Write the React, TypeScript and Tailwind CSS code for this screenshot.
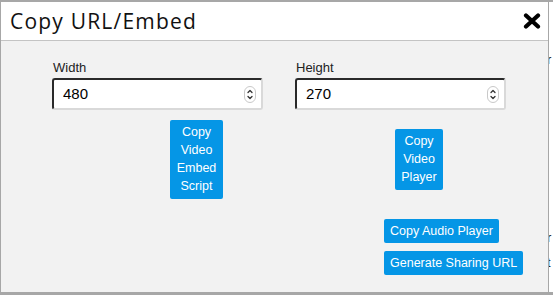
import { useState } from "react";

const sans = { fontFamily: '"Liberation Sans", Arial, sans-serif' };

function Spinner() {
  return (
    <span className="flex h-[17px] w-[12px] flex-col items-center justify-center rounded-full border border-[#c9c9c9] bg-white">
      <svg width="8" height="13" viewBox="0 0 8 13" fill="none" stroke="#333" strokeWidth="1.3" strokeLinecap="round" strokeLinejoin="round">
        <path d="M2 4.5 L4 2.5 L6 4.5" />
        <path d="M2 8.5 L4 10.5 L6 8.5" />
      </svg>
    </span>
  );
}

function NumberField({ label, value, onChange }: { label: string; value: string; onChange: (v: string) => void }) {
  return (
    <div className="flex flex-col">
      <label className="pl-[1px] text-[13px] leading-[15px] text-[#222]">{label}</label>
      <div className="mt-[3px] flex h-[32px] items-center rounded-[3px] border-2 border-t-[#2a2a2a] border-l-[#2a2a2a] border-r-[#d9d9d9] border-b-[#d9d9d9] bg-white pl-[9px] pr-[5px]">
        <input
          value={value}
          onChange={(e) => onChange(e.target.value)}
          className="min-w-0 flex-1 bg-transparent text-[15px] text-black outline-none"
          style={sans}
        />
        <Spinner />
      </div>
    </div>
  );
}

function BlueButton({ children, className = "" }: { children: React.ReactNode; className?: string }) {
  return (
    <button
      type="button"
      className={`rounded-[2px] bg-[#0596e6] text-center text-[12.5px] leading-[18px] text-white ${className}`}
    >
      {children}
    </button>
  );
}

export default function App() {
  const [width, setWidth] = useState("480");
  const [height, setHeight] = useState("270");

  return (
    <div className="flex h-[295px] w-[553px] overflow-hidden bg-[#a7a7a7] pt-[2px] pb-[3px] pl-[1px]" style={sans}>
      {/* dialog */}
      <div className="flex w-[547px] flex-col bg-[#f2f2f2]">
        <div className="flex h-[39px] shrink-0 items-center justify-between border-b border-[#c4c4c4] bg-white pl-[9px] pr-[6px]">
          <h2
            className="text-[21px] leading-none tracking-[1.2px] text-[#111]"
            style={{ fontFamily: '"Open Sans", "Noto Sans", sans-serif', fontWeight: 500 }}
          >
            Copy URL/Embed
          </h2>
          <button type="button" className="flex h-[20px] w-[20px] items-center justify-center">
            <svg width="18" height="16" viewBox="0 0 18 16">
              <path d="M3 2.5 L15 13.5 M15 2.5 L3 13.5" stroke="#000" strokeWidth="4.2" strokeLinecap="round" />
            </svg>
          </button>
        </div>

        <div className="grid grid-cols-[211px_211px] gap-x-[32px] pl-[51px] pt-[19px]">
          <NumberField label="Width" value={width} onChange={setWidth} />
          <NumberField label="Height" value={height} onChange={setHeight} />

          <div className="flex h-[96px] items-center pl-[118px] pt-[2px]">
            <BlueButton className="w-[53px] py-[3.5px]">
              Copy Video Embed Script
            </BlueButton>
          </div>
          <div className="flex h-[96px] items-center pl-[100px] pt-[2px]">
            <BlueButton className="w-[48px] py-[3.5px]">
              Copy Video Player
            </BlueButton>
          </div>

          <div />
          <div className="flex flex-col items-start gap-[8px] pl-[89px] pt-[13px]">
            <BlueButton className="whitespace-nowrap px-[6px] py-[3px]">Copy Audio Player</BlueButton>
            <BlueButton className="whitespace-nowrap px-[6px] py-[3px]">Generate Sharing URL</BlueButton>
          </div>
        </div>
      </div>

      {/* page behind the dialog */}
      <div className="ml-[1px] flex flex-1 flex-col overflow-hidden bg-white text-[13px] leading-[15px] text-[#222]">
        <span className="mt-[13px] -ml-[3px]">:</span>
        <span className="mt-[22px] -ml-[2px]">r</span>
        <span className="mt-[30px] -ml-[3px]">:</span>
        <span className="mt-[118px] -ml-[2px]">r</span>
        <span className="mt-[10px] -ml-[2px]">t</span>
        <span className="mt-[10px] -ml-[3px]">:</span>
      </div>
    </div>
  );
}
